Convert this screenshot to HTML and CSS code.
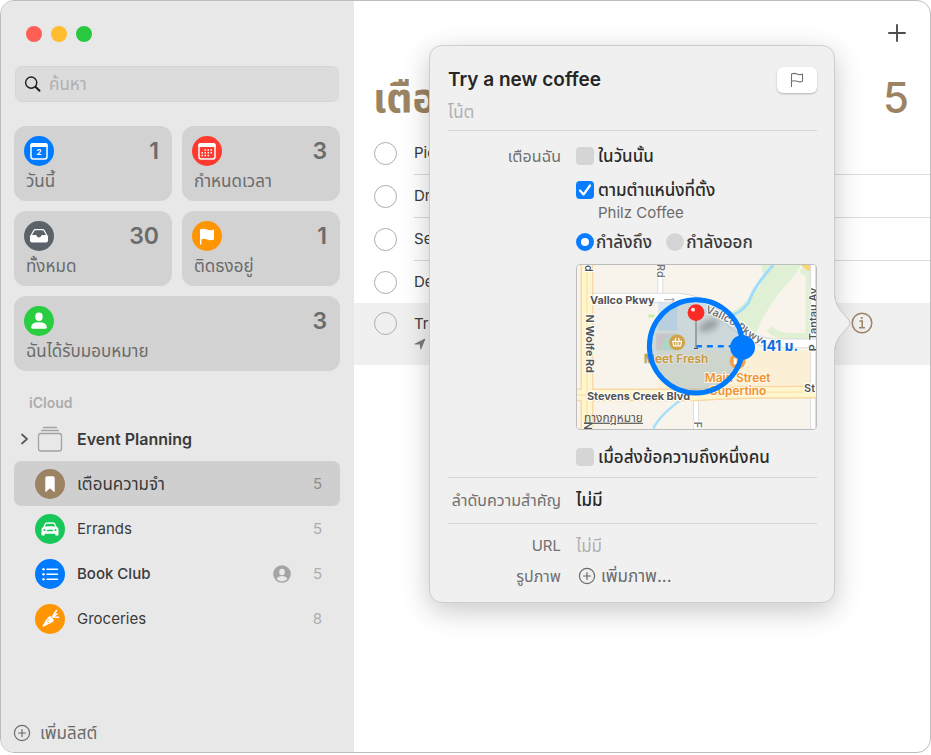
FILE: index.html
```html
<!DOCTYPE html>
<html lang="th">
<head>
<meta charset="utf-8">
<title>เตือนความจำ</title>
<link rel="stylesheet" href="styles.css">
</head>
<body>
<div class="window">
  <aside class="sidebar">
    <div class="lights"><span class="light red"></span><span class="light yellow"></span><span class="light green"></span></div>

    <label class="search">
      <svg width="18" height="18" viewBox="0 0 18 18" fill="none" stroke="#1e1e1e" stroke-width="1.400" stroke-linecap="round"><circle cx="7.200" cy="7.600" r="5.600"/><path d="M11.400 11.800L15.500 15.800" stroke-width="2"/></svg>
      <input class="thai" type="search" placeholder="ค้นหา" aria-label="ค้นหา">
    </label>

    <div class="cards">
      <a class="card" href="#today">
        <span class="card-top">
          <svg width="30" height="30" viewBox="0 0 30 30"><circle cx="15" cy="15" r="15" fill="#007aff"/><rect x="7" y="8" width="16" height="15" rx="2.2" fill="none" stroke="#fff" stroke-width="1.5"/><path d="M6.3 9a2 2 0 0 1 2-2h13.400a2 2 0 0 1 2 2v2H6.300z" fill="#fff"/><text x="15" y="19" text-anchor="middle" class="day">2</text></svg>
          <span class="count">1</span>
        </span>
        <span class="card-label thai">วันนี้</span>
      </a>
      <a class="card" href="#scheduled">
        <span class="card-top">
          <svg width="30" height="30" viewBox="0 0 30 30"><circle cx="15" cy="15" r="15" fill="#ff3b30"/><rect x="7" y="8" width="16" height="15" rx="2.200" fill="none" stroke="#fff" stroke-width="1.500"/><path d="M6.300 9a2 2 0 0 1 2-2h13.400a2 2 0 0 1 2 2v2H6.300z" fill="#fff"/><path d="M12.500 14h9M9.500 16.800h11.500M9.500 19.600h8.500" stroke="#fff" stroke-width="1.500" stroke-dasharray="1.500 1.500"/></svg>
          <span class="count">3</span>
        </span>
        <span class="card-label thai">กำหนดเวลา</span>
      </a>
      <a class="card" href="#all">
        <span class="card-top">
          <svg width="30" height="30" viewBox="0 0 30 30"><circle cx="15" cy="15" r="15" fill="#5b626a"/><path d="M6 15.200L9.500 9q.6-1 1.800-1h7.400q1.200 0 1.800 1L24 15.200v4.300a2 2 0 0 1-2 2H8a2 2 0 0 1-2-2z" fill="#fff"/><path d="M8 14l2.500-4.300q.3-.5 1-.5h7q.7 0 1 .5L22 14h-3.800q-.7 0-.9.8a2.400 2.400 0 0 1-4.600 0q-.2-.8-.9-.8z" fill="#5b626a"/></svg>
          <span class="count">30</span>
        </span>
        <span class="card-label thai">ทั้งหมด</span>
      </a>
      <a class="card" href="#flagged">
        <span class="card-top">
          <svg width="30" height="30" viewBox="0 0 30 30"><circle cx="15" cy="15" r="15" fill="#ff9500"/><path d="M8 8.300q3.500-1.300 7 .2t7-.2v10.200q-3.500 1.400-7 0t-5.600-.1V23a.7.700 0 0 1-1.400 0z" fill="#fff"/></svg>
          <span class="count">1</span>
        </span>
        <span class="card-label thai">ติดธงอยู่</span>
      </a>
      <a class="card wide" href="#assigned">
        <span class="card-top">
          <svg width="30" height="30" viewBox="0 0 30 30"><circle cx="15" cy="15" r="15" fill="#28cd41"/><ellipse cx="15" cy="10.800" rx="3.700" ry="4.200" fill="#fff"/><path d="M7.200 21.200q0-4.800 7.800-4.900 7.800.1 7.800 4.900 0 1.500-1.500 1.500H8.700q-1.500 0-1.500-1.500z" fill="#fff"/></svg>
          <span class="count">3</span>
        </span>
        <span class="card-label thai">ฉันได้รับมอบหมาย</span>
      </a>
    </div>

    <h2 class="account">iCloud</h2>
    <nav class="lists">
      <a class="list group" href="#event">
        <svg class="chevron" width="9" height="12" viewBox="0 0 9 12" fill="none" stroke="#5a5a5a" stroke-width="1.800" stroke-linecap="round" stroke-linejoin="round"><path d="M2 1.500L7 6l-5 4.500"/></svg>
        <svg class="glyph" width="30" height="30" viewBox="0 0 30 30" fill="none" stroke="#a3a3a3" stroke-width="1.300" stroke-linecap="round"><rect x="3.500" y="9.500" width="23" height="17.500" rx="2.500"/><path d="M6.500 6.500h17M8.500 3.500h13"/></svg>
        <span class="name">Event Planning</span>
      </a>
      <a class="list selected" href="#reminders">
        <svg class="glyph" width="30" height="30" viewBox="0 0 30 30"><circle cx="15" cy="15" r="15" fill="#9c8363"/><path d="M10.300 9q0-1.700 1.700-1.700h6q1.700 0 1.700 1.700v13.600q0 .9-.8.200L15 19.200l-3.900 3.600q-.8.700-.8-.2z" fill="#fff"/></svg>
        <span class="name thai">เตือนความจำ</span><span class="num">5</span>
      </a>
      <a class="list" href="#errands">
        <svg class="glyph" width="30" height="30" viewBox="0 0 30 30"><circle cx="15" cy="15" r="15" fill="#18c759"/><path d="M8.300 13l1.400-3.300q.4-1.100 1.600-1.200 3.700-.4 7.400 0 1.200.1 1.600 1.200l1.400 3.300q1.800.8 1.800 2.700v5q0 .9-.9.900h-1.400q-.9 0-.9-.9v-1H9.700v1q0 .9-.9.900H7.400q-.9 0-.9-.9v-5q0-1.900 1.800-2.700z" fill="#fff"/><path d="M9.900 12.600l1-2.300q.2-.5.700-.5 3.400-.3 6.800 0 .5 0 .7.500l1 2.300q-5.100-.5-10.200 0z" fill="#18c759"/><circle cx="9.500" cy="16" r="1.100" fill="#18c759"/><circle cx="20.500" cy="16" r="1.100" fill="#18c759"/><path d="M12.500 16.500h5" stroke="#18c759" stroke-width="1.500" stroke-linecap="round"/></svg>
        <span class="name">Errands</span><span class="num">5</span>
      </a>
      <a class="list" href="#book">
        <svg class="glyph" width="30" height="30" viewBox="0 0 30 30"><circle cx="15" cy="15" r="15" fill="#007aff"/><path d="M12 10.200h10.500M12 15.200h10.500M12 20.200h10.500" stroke="#fff" stroke-width="1.600" stroke-linecap="round"/><g fill="#fff"><circle cx="8.500" cy="10.200" r="1.200"/><circle cx="8.500" cy="15.200" r="1.200"/><circle cx="8.500" cy="20.200" r="1.200"/></g></svg>
        <span class="name medium">Book Club</span>
        <svg width="18" height="18" viewBox="0 0 18 18"><circle cx="9" cy="9" r="8.800" fill="#a4a4a4"/><ellipse cx="9" cy="7" rx="2.800" ry="3.300" fill="#e8e8e8"/><path d="M3.600 14q1.300-3 5.400-3t5.400 3q-2.200 2.400-5.400 2.400T3.600 14z" fill="#e8e8e8"/></svg>
        <span class="num">5</span>
      </a>
      <a class="list" href="#groceries">
        <svg class="glyph" width="30" height="30" viewBox="0 0 30 30"><circle cx="15" cy="15" r="15" fill="#ff9500"/><path d="M7.800 21.300l4.400-7.400q1.300-2 3.500-1.600l3 3.300q.3 1.800-1.300 2.700l-8.400 4.300q-1.900.5-1.200-1.300z" fill="#fff"/><path d="M17.600 12.500L21.500 6.500M18.300 12.500l3.700-2.600M18.500 13.300h5" stroke="#fff" stroke-width="1.500" stroke-linecap="round"/><path d="M12 14.500l1.700 1.700M14 19l-1.600-1.500" stroke="#ff9500" stroke-width=".8" stroke-linecap="round"/></svg>
        <span class="name">Groceries</span><span class="num">8</span>
      </a>
    </nav>

    <button class="add-list thai" type="button">
      <svg width="18" height="18" viewBox="0 0 18 18" fill="none" stroke="#6b6b6b" stroke-width="1.200" stroke-linecap="round"><circle cx="9" cy="9" r="7.600"/><path d="M9 5.500v7M5.500 9h7"/></svg>
      เพิ่มลิสต์
    </button>
  </aside>

  <main class="main">
    <div class="toolbar">
      <button class="add" type="button" aria-label="+"><svg width="18" height="18" viewBox="0 0 18 18" stroke="#4c4c4c" stroke-width="1.900" stroke-linecap="round"><path d="M9 1v16M1 9h16"/></svg></button>
    </div>
    <header class="heading"><h1>เตือนความจำ</h1><span class="total">5</span></header>
    <ul class="tasks">
      <li class="task"><input type="checkbox" id="t1"><label for="t1">Pic</label></li>
      <li class="task"><input type="checkbox" id="t2"><label for="t2">Dr</label></li>
      <li class="task"><input type="checkbox" id="t3"><label for="t3">Se</label></li>
      <li class="task"><input type="checkbox" id="t4"><label for="t4">De</label></li>
      <li class="task current">
        <input type="checkbox" id="t5">
        <div class="task-body">
          <label for="t5">Try</label>
          <svg width="12" height="12" viewBox="0 0 12 12"><path d="M.6 5.800L10.600.700q.9-.3.700.6L7.200 11.200q-.5.800-.8-.1L5.800 6.600 1 6.500q-1-.2-.4-.7z" fill="#7a7a7a"/></svg>
        </div>
        <button class="info" type="button" aria-label="i"><svg width="22" height="22" viewBox="0 0 22 22" fill="none" stroke="#9c8363" stroke-width="1.500"><circle cx="11" cy="11" r="9.800"/><path d="M8.500 9h2.700v6.500M8 15.800h6"/><circle cx="10.800" cy="6" r="1.100" fill="#9c8363" stroke="none"/></svg></button>
      </li>
    </ul>
  </main>

  <section class="popover">
    <svg class="tip" width="18" height="58" viewBox="0 0 18 58"><path d="M0 2Q1.500 11 7 17L15 26q2 3 0 6L7 41Q1.500 47 0 56z" fill="#f0f0f0"/><path d="M1 2Q1.500 11 7 17L15 26q2 3 0 6L7 41Q1.500 47 1 56" fill="none" stroke="#c6c6c6"/></svg>
    <div class="pop-head">
      <h2>Try a new coffee</h2>
      <button class="flag" type="button" aria-label="flag"><svg width="16" height="18" viewBox="0 0 16 18" fill="none" stroke="#707070" stroke-width="1.100" stroke-linecap="round" stroke-linejoin="round"><path d="M2.500 15.500V3q2.500-1.200 5.500 0t5.500 0v7.300q-2.500 1.200-5.500 0t-5.500 0"/></svg></button>
    </div>
    <input class="note thai" type="text" placeholder="โน้ต" aria-label="โน้ต">
    <div class="fields remind thai">
      <span class="field-label">เตือนฉัน</span>
      <label class="check"><input type="checkbox">ในวันนั้น</label>
      <div class="value place">
        <label class="check"><input type="checkbox" checked>ตามตำแหน่งที่ตั้ง</label>
        <span class="place-name">Philz Coffee</span>
      </div>
      <div class="value radios">
        <label><input type="radio" name="when" checked>กำลังถึง</label>
        <label><input type="radio" name="when">กำลังออก</label>
      </div>
      <svg class="value map" viewBox="0 0 241 165" role="img">
        <rect width="241" height="165" fill="#f8f4ec"/>
        <path d="M82 86h159v42H82z" fill="#fbf0d6"/>
        <path d="M186 0h40q-8 14-22 28-16 22-22 38-4 8-18 4l-22-16q20-8 31-20 12-10 15-22z" fill="#dff0d4"/>
        <path d="M226 4l8 6v62h-22q-14-2-18-8" fill="none" stroke="#dff0d4" stroke-width="7"/>
        <path d="M105 136q-22 16-28 29" fill="none" stroke="#a6e0fb" stroke-width="2.500"/>
        <path d="M198 0q-20 22-25 38-9 12-20 13" fill="none" stroke="#9edcf9" stroke-width="3"/>
        <path d="M72 50h6v3h-6z" fill="#c8eca6"/>
        <path d="M226 0h15v8q-9-1-15-8z" fill="#f8d66b"/>
        <path d="M82 38h19v28H82z" fill="#d5e6f4"/><path d="M80 69h20v17H80z" fill="#f3d3ce"/><path d="M84 86q2-16 16-16v16z" fill="#cdeccb"/>
        <path d="M84 0v30M120 130v35M238 0v165" stroke="#dedede" stroke-width="6"/><path d="M84 0v34M120 130v35M238 0v165" stroke="#fff" stroke-width="4"/>
        <path d="M15 33h87q24 2 47 19 28 26 48 27h44" fill="none" stroke="#d9d9d9" stroke-width="10"/>
        <path d="M15 33h87q24 2 47 19 28 26 48 27h44" fill="none" stroke="#fff" stroke-width="8"/>
        <path d="M10 0v165M0 131h120q40-3 121-3" fill="none" stroke="#f8d9a4" stroke-width="13"/>
        <path d="M10 0v165M0 131h120q40-3 121-3" fill="none" stroke="#fff6cf" stroke-width="10"/>
        <path d="M10 0v165M0 131h120q40-3 121-3" fill="none" stroke="#fbe6ae" stroke-width="1.500"/>
        <circle cx="120" cy="82" r="48" fill="#8fb0c0" fill-opacity=".42"/>
        <circle cx="101" cy="78" r="8" fill="#d1a246"/>
        <path d="M96.500 77h9l-1 4.500h-7zM98.500 77l1.300-3.500M103.500 77l-1.300-3.500" fill="none" stroke="#fff" stroke-width="1.200"/>
        <path d="M99.500 77v4M101 77v4M102.500 77v4" stroke="#fff" stroke-width=".7"/>
        <g class="roads">
          <text class="wide-road" x="13" y="39">Vallco Pkwy</text>
          <text class="wide-road" x="10" y="136">Stevens Creek Blvd</text>
          <text x="229" y="128">St</text>
          <text class="wide-road" transform="translate(9 50) rotate(90)">N Wolfe Rd</text>
          <text transform="translate(8 0) rotate(90)">d</text>
          <text transform="translate(7 158) rotate(90)">N</text>
          <text transform="translate(242 76) rotate(-90)">Tantau Av</text>
          <text transform="translate(242 87) rotate(-90)">P</text>
          <path id="curve" d="M129 48Q148 54 165 67T206 86" fill="none"/>
          <text class="light-road"><textPath href="#curve">Vallco Pkwy</textPath></text>
          <text class="light-road" transform="translate(81 -1) rotate(90)">Rd</text>
          <text class="light-road" transform="translate(118 158) rotate(90)">F</text>
        </g>
        <path d="M88 35h10M96 33l2 2-2 2" fill="none" stroke="#999"/>
        <g class="poi">
          <text class="gold" x="100" y="99">Meet Fresh</text>
          <text x="162" y="118">Main Street</text>
          <text x="162" y="131">Cupertino</text>
        </g>
        <circle cx="162" cy="97" r="8" fill="#efa14a"/><path d="M158 94h3v6h-3zM163 94h3v3h-3z" fill="#fff"/>
        <ellipse cx="133" cy="61" rx="11" ry="5" transform="rotate(-25 133 61)" class="pin-shadow"/>
        <path d="M120 82h39" stroke="#007aff" stroke-width="2.500" stroke-dasharray="6 5"/>
        <circle cx="120" cy="82" r="47" fill="none" stroke="#007aff" stroke-width="5"/>
        <circle cx="167" cy="83" r="12.500" fill="#007aff"/>
        <path d="M120 54v29" stroke="#8d8d8d" stroke-width="1.500"/><path d="M118 84h4" stroke="#333"/>
        <circle cx="120" cy="48" r="8.500" fill="#fa2b25"/><circle cx="117" cy="45" r="2" fill="#fff" fill-opacity=".9"/>
        <text class="distance" x="185" y="87">141 ม.</text>
        <text class="legal" x="7" y="158">ทางกฎหมาย</text>
      </svg>
      <label class="value check person"><input type="checkbox">เมื่อส่งข้อความถึงหนึ่งคน</label>
    </div>
    <div class="fields priority thai">
      <label class="field-label" for="priority">ลำดับความสำคัญ</label>
      <select id="priority"><option>ไม่มี</option></select>
    </div>
    <div class="fields extras thai">
      <label class="field-label latin" for="url">URL</label>
      <input id="url" type="url" placeholder="ไม่มี">
      <span class="field-label">รูปภาพ</span>
      <button class="add-image" type="button">
        <svg width="18" height="18" viewBox="0 0 18 18" fill="none" stroke="#6b6b6b" stroke-width="1.200" stroke-linecap="round"><circle cx="9" cy="9" r="7.600"/><path d="M9 5.500v7M5.500 9h7"/></svg>
        เพิ่มภาพ...
      </button>
    </div>
  </section>
</div>
</body>
</html>
```
FILE: styles.css
```css
* { box-sizing: border-box; }

body {
  margin: 0;
  background: #fff;
  color: #3a3a3a;
  font: 15px/20px Inter, "Noto Sans Thai", "Noto Sans", sans-serif;
}

h1, h2, ul { margin: 0; padding: 0; }
a { color: inherit; text-decoration: none; }
svg { display: block; flex: none; }
button, input, select {
  margin: 0;
  padding: 0;
  border: 0;
  background: none;
  color: inherit;
  font: inherit;
  appearance: none;
  outline: none;
}
.thai { font-size: 17px; }

.window {
  position: relative;
  display: flex;
  height: calc(100vh - 2px);
  overflow: hidden;
  border: 1px solid #bdbdbd;
  border-radius: 14px;
}

/* Sidebar */
.sidebar {
  display: flex;
  flex-direction: column;
  width: 38%;
  padding: 25px 14px 7px 13px;
  background: #e8e8e8;
}
.lights { display: flex; gap: 9px; padding-left: 12px; }
.light { width: 16px; height: 16px; border-radius: 50%; }
.red { background: #ff5f57; }
.yellow { background: #febc2e; }
.green { background: #28c840; }

.search {
  display: flex;
  align-items: center;
  gap: 7px;
  height: 36px;
  margin: 24px 1px;
  padding: 0 8px;
  border: 1px solid #d6d6d6;
  border-radius: 7px;
  background: #dcdcdc;
}
.search input { flex: 1; min-width: 0; }
::placeholder { color: #b0b0b0; opacity: 1; }

.cards { display: grid; grid-template-columns: 1fr 1fr; gap: 10px; }
.card {
  height: 75px;
  padding: 10px 13px 10px 10px;
  border-radius: 12px;
  background: #d2d2d2;
  color: #6b6b6b;
}
.wide { grid-column: 1 / -1; }
.card-top { display: flex; justify-content: space-between; height: 30px; }
.count { font-size: 23px; line-height: 30px; font-weight: 600; }
.card-label { display: block; padding: 5px 2px; }
.day { fill: #fff; font-size: 8px; font-weight: 700; }

.account {
  margin-top: 22px;
  padding-left: 15px;
  color: #adadad;
  font-size: 14px;
  line-height: 20px;
  font-weight: 600;
}
.lists { display: flex; flex-direction: column; margin-top: 3px; }
.list {
  display: flex;
  align-items: center;
  height: 45px;
  padding: 0 18px 0 21px;
  border-radius: 7px;
}
.group { padding-left: 6px; font-size: 16px; font-weight: 600; }
.chevron { margin-right: 6px; }
.name { flex: 1; margin-left: 12px; }
.medium { font-weight: 500; }
.num { width: 31px; color: #adadad; text-align: right; }
.selected { background: #cfcfcf; }
.selected .num { color: #8e8e8e; }

.add-list {
  display: flex;
  align-items: center;
  gap: 9px;
  height: 24px;
  margin-top: auto;
  align-self: flex-start;
  color: #6b6b6b;
}
.add-list svg { margin-left: -1px; }

/* Reminder list */
.main { flex: 1; min-width: 0; }
.toolbar { display: flex; justify-content: flex-end; padding: 23px 24px 0; }
.add { height: 18px; }
.heading {
  display: flex;
  justify-content: space-between;
  height: 90px;
  padding: 30px 21px 0 19px;
  color: #9c8363;
  line-height: 52px;
}
.heading h1 { font-size: 40px; font-weight: 700; }
.total { font-size: 42px; font-weight: 500; }
.tasks { list-style: none; }
.task { display: flex; align-items: center; height: 43px; padding-left: 20px; }
.task label {
  display: flex;
  flex: 1;
  align-items: center;
  height: 43px;
  margin-left: 17px;
  border-bottom: 1px solid #dcdcdc;
}
.task input {
  width: 23px;
  height: 23px;
  border: 1px solid #adadad;
  border-radius: 50%;
}
.task:nth-child(4) { height: 42px; }
.task:nth-child(4) label { border: 0; }
.current {
  align-items: flex-start;
  height: 62px;
  padding: 9px 57px 0 20px;
  background: #f0f0f0;
}
.task-body { flex: 1; }
.current label { height: 23px; border: 0; }
.task-body svg { margin: 3px 17px; }

/* Detail popover */
.popover {
  position: absolute;
  top: 44px;
  right: 95px;
  width: 406px;
  padding: 21px 17px 11px 18px;
  border: 1px solid #cdcdcd;
  border-radius: 13px;
  background: #f0f0f0;
  box-shadow: 0 8px 28px rgba(0, 0, 0, .22);
}
.tip { position: absolute; top: 248px; left: 100%; }
.pop-head { display: flex; align-items: center; justify-content: space-between; height: 26px; }
.pop-head h2 { color: #262626; font-size: 19px; line-height: 26px; font-weight: 600; }
.flag {
  display: grid;
  place-items: center;
  width: 40px;
  height: 26px;
  border-radius: 6px;
  background: #fff;
  box-shadow: 0 1px 2px rgba(0, 0, 0, .25);
}
.note { display: block; width: 100%; height: 37px; }

.fields {
  display: grid;
  grid-template-columns: 113px 1fr;
  column-gap: 15px;
  align-items: center;
  border-top: 1px solid #d6d6d6;
}
.field-label { color: #707070; font-size: 16px; text-align: right; white-space: nowrap; }
.latin { font-size: 15px; }
.value { grid-column: 2; }
.remind { padding: 15px 0 10px; }
.check { display: flex; align-items: center; gap: 4px; height: 20px; color: #2b2b2b; font-weight: 500; }
.check input, .radios input { flex: none; width: 18px; height: 18px; background: #d5d5d5; }
.check input { border-radius: 4px; }
.check input:checked {
  background: #0a7cff url("data:image/svg+xml,%3Csvg xmlns='http://www.w3.org/2000/svg' viewBox='0 0 18 18'%3E%3Cpath d='M4 9.500l3.500 4L14 4.500' fill='none' stroke='white' stroke-width='2.200' stroke-linecap='round' stroke-linejoin='round'/%3E%3C/svg%3E");
}
.place { margin-top: 14px; }
.place-name { display: block; margin: 3px 0 0 22px; color: #6b6b6b; font-size: 15px; }
.radios { display: flex; gap: 14px; margin: 9px 0 12px; color: #3a3a3a; font-weight: 500; }
.radios label { display: flex; align-items: center; gap: 2px; }
.radios input { border-radius: 50%; }
.radios input:checked { border: 5px solid #0a7cff; background: #fff; }
.map { width: 100%; border: 1px solid #bdbdbd; border-radius: 4px; }
.person { margin-top: 17px; }

.priority { height: 46px; }
.priority select { color: #262626; font-weight: 500; }
.extras { grid-auto-rows: 30px; padding-top: 7px; }
.extras input { min-width: 0; }
.add-image { display: flex; align-items: center; gap: 5px; padding-left: 2px; color: #6b6b6b; }

/* Map lettering */
.map text { paint-order: stroke; stroke-linejoin: round; }
.roads { fill: #555; stroke: #fff; stroke-width: 2px; font-size: 11px; font-weight: 600; }
.roads path { stroke: none; }
.wide-road { font-weight: 700; }
.light-road { fill: #777; }
.poi { fill: #ef922f; stroke: #fff8ea; stroke-width: 2px; font-size: 12px; font-weight: 600; text-anchor: middle; }
.gold { fill: #c9983c; stroke: #dfe3df; }
.pin-shadow { fill: #444; opacity: .4; filter: blur(3px); }
.distance { fill: #0a6ce8; stroke: #fff8ea; stroke-width: 2px; font-size: 14px; font-weight: 700; }
.legal { fill: #555; font-size: 12px; text-decoration: underline; }
```
